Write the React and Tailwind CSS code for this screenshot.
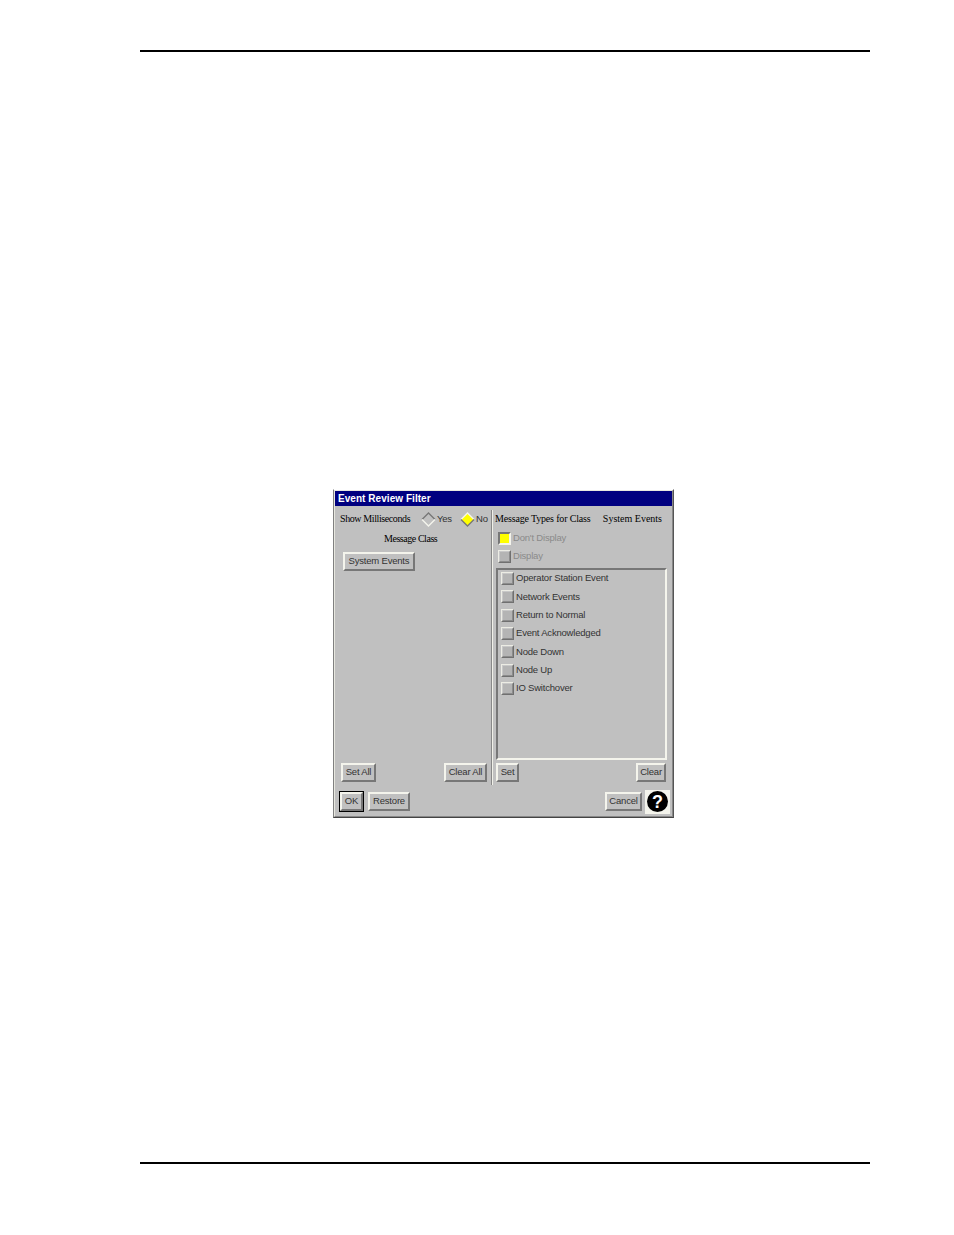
const sans = "font-['Liberation_Sans',Arial,sans-serif] text-[9.5px] tracking-[-0.2px] text-[#333]";
const serif = "font-['Liberation_Serif','Times_New_Roman',serif] text-[10px] text-black whitespace-nowrap";
const bevel = "border-2 border-t-[#f4f4ec] border-l-[#f4f4ec] border-r-[#777] border-b-[#777]";

const types = [
  "Operator Station Event",
  "Network Events",
  "Return to Normal",
  "Event Acknowledged",
  "Node Down",
  "Node Up",
  "IO Switchover",
];

const Btn = ({ label, className }) => (
  <div className={`${bevel} ${sans} bg-[#c0c0c0] flex items-center justify-center whitespace-nowrap ${className}`}>
    {label}
  </div>
);

const Check = ({ label, muted, on }) => (
  <div className="flex items-center h-[12px]">
    {on ? (
      <div className="w-[13px] h-[13px] shrink-0 border-2 border-t-[#777] border-l-[#777] border-r-[#f4f4ec] border-b-[#f4f4ec]">
        <div className="w-full h-full bg-[#ffff00]"></div>
      </div>
    ) : (
      <div className="w-[13px] h-[13px] shrink-0 border border-t-[#ecece4] border-l-[#ecece4] border-r-[#707070] border-b-[#707070] bg-[#b4b4b4]">
        <div className="w-full h-full border border-t-[#c8c8c8] border-l-[#c8c8c8] border-r-[#8c8c8c] border-b-[#8c8c8c]"></div>
      </div>
    )}
    <span className={`ml-[2px] whitespace-nowrap font-['Liberation_Sans',Arial,sans-serif] text-[9.5px] tracking-[-0.2px] ${muted ? "mt-[1px] text-[#8a8a8a]" : "text-[#333]"}`}>
      {label}
    </span>
  </div>
);

const Diamond = ({ on }) => (
  <svg width="15" height="15" viewBox="0 0 15 15" className="shrink-0 mt-[2px]">
    <path d="M7.5 1 L14 7.5 L7.5 14 L1 7.5 Z" fill={on ? "#ffff00" : "#c0c0c0"} />
    <path d="M1 7.5 L7.5 1 L14 7.5" fill="none" stroke={on ? "#f4f4ec" : "#777"} strokeWidth="1.4" />
    <path d="M1 7.5 L7.5 14 L14 7.5" fill="none" stroke={on ? "#777" : "#f4f4ec"} strokeWidth="1.4" />
  </svg>
);

const App = () => {
  return (
    <div className="w-[954px] h-[1235px] bg-white flex flex-col overflow-hidden">
      <div className="mt-[50px] ml-[140px] w-[730px] h-[2px] bg-black"></div>

      <div className="mt-[437px] ml-[333px] w-[341px] h-[329px] flex flex-col bg-[#c0c0c0] border border-t-white border-l-[#808080] border-r-[#555] border-b-[#444]">
        <div className="flex-1 flex flex-col border border-t-[#e8e8e0] border-l-[#e8e8e0] border-r-[#888] border-b-[#888]">
          <div className="h-[15px] bg-[#000080] pl-[3px] flex items-center text-white font-['Liberation_Sans',Arial,sans-serif] font-bold text-[10px] tracking-[0.05px]">
            Event Review Filter
          </div>

          <div className="h-[279px] flex">
            <div className="w-[156px] flex flex-col pb-[3px]">
              <div className="h-[24px] flex items-center pl-[5px]">
                <span className={`${serif} w-[81px] tracking-[-0.4px]`}>Show Milliseconds</span>
                <Diamond />
                <span className={`${sans} mt-[2px] ml-[1px] w-[23px]`}>Yes</span>
                <Diamond on />
                <span className={`${sans} mt-[2px] ml-[1px]`}>No</span>
              </div>
              <div className={`${serif} h-[16px] flex items-center pl-[49px] tracking-[-0.45px]`}>Message Class</div>
              <Btn label="System Events" className="mt-[6px] ml-[8px] w-[72px] h-[19px]" />
              <div className="mt-auto flex justify-between pl-[6px] pr-[4px]">
                <Btn label="Set All" className="w-[35px] h-[19px]" />
                <Btn label="Clear All" className="w-[43px] h-[19px]" />
              </div>
            </div>

            <div className="w-[2px] mt-[4px] bg-[#f0f0e8] border-l border-[#888]"></div>

            <div className="flex-1 flex flex-col pb-[3px]">
              <div className="h-[24px] flex items-center justify-between pl-[2px] pr-[10px]">
                <span className={`${serif} tracking-[-0.17px]`}>Message Types for Class</span>
                <span className={serif}>System Events</span>
              </div>
              <div className="mt-[2px] pl-[5px] flex flex-col gap-[6px]">
                <Check label="Don't Display" muted on />
                <Check label="Display" muted />
              </div>
              <div className="mt-[6px] ml-[3px] w-[171px] h-[192px] pt-[2.5px] pl-[3px] flex flex-col gap-[6.33px] border-2 border-t-[#777] border-l-[#777] border-r-[#f4f4ec] border-b-[#f4f4ec]">
                {types.map((t) => (
                  <Check key={t} label={t} />
                ))}
              </div>
              <div className="mt-auto flex justify-between pl-[3px] pr-[6px]">
                <Btn label="Set" className="w-[23px] h-[19px]" />
                <Btn label="Clear" className="w-[30px] h-[19px]" />
              </div>
            </div>
          </div>

          <div className="flex-1 flex items-center pt-[2px] pl-[4px] pr-[2px]">
            <div className="border border-black">
              <Btn label="OK" className="w-[23px] h-[19px]" />
            </div>
            <Btn label="Restore" className="ml-[4px] w-[42px] h-[19px]" />
            <Btn label="Cancel" className="ml-auto w-[37px] h-[19px]" />
            <div className="ml-[3px] w-[25px] h-[24px] flex items-center justify-center border-2 border-t-[#f4f4ec] border-l-[#f4f4ec] border-r-[#f4f4ec] border-b-[#f4f4ec] bg-[#f4f4ec]">
              <div className="w-[21px] h-[21px] rounded-full bg-black text-white flex items-center justify-center font-['Liberation_Sans',Arial,sans-serif] font-bold text-[18px] leading-none">
                ?
              </div>
            </div>
          </div>
        </div>
      </div>

      <div className="mt-[344px] ml-[140px] w-[730px] h-[2px] bg-black"></div>
    </div>
  );
};

export default App;
